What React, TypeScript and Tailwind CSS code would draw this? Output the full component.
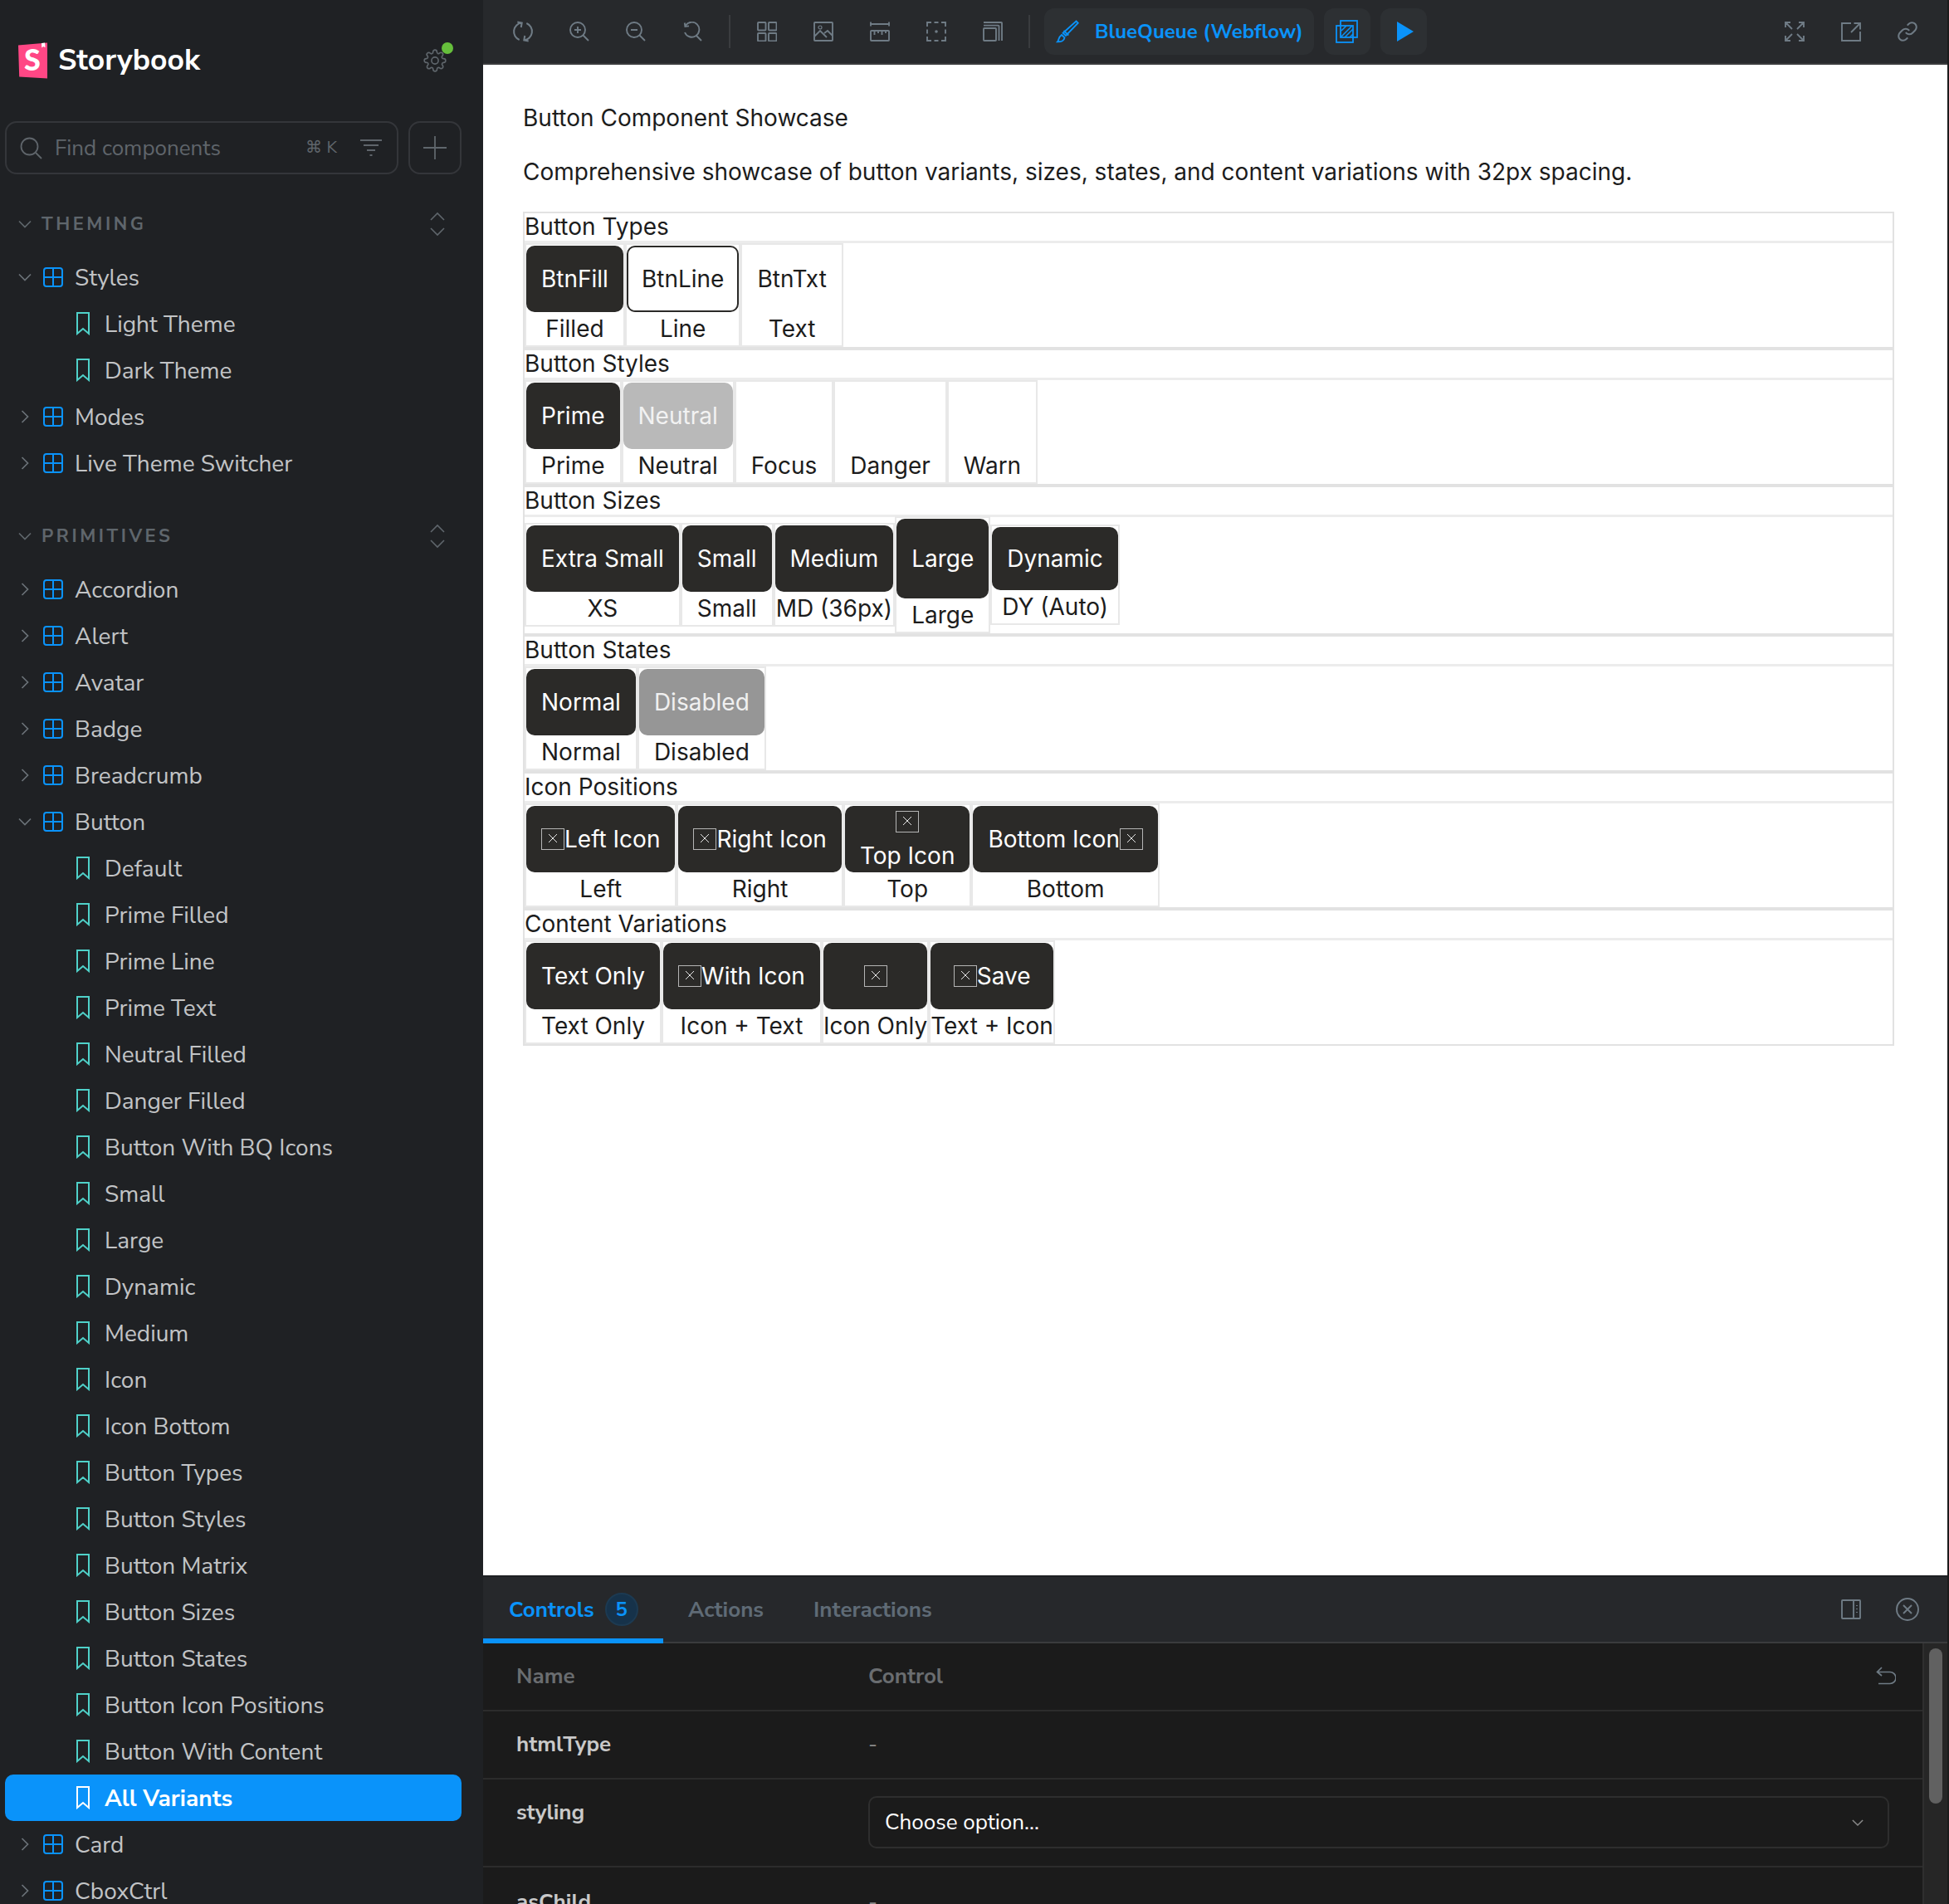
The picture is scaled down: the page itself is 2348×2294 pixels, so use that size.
import React from 'react';

type IconProps = { className?: string };

const Svg: React.FC<{ className?: string; children: React.ReactNode; size?: number; vb?: string }> = ({
  className,
  children,
  size = 24,
  vb = '0 0 24 24',
}) => (
  <svg width={size} height={size} viewBox={vb} fill="none" stroke="currentColor" strokeWidth="1.9" className={className}>
    {children}
  </svg>
);

// Toolbar icons
const SyncIcon = () => (
  <Svg size={26}>
    <path d="M8 21.200A9.800 9.800 0 0 1 10.600 2.400M5.800 1.400l5 1-.9 5" />
    <path d="M16 2.800a9.800 9.800 0 0 1-2.600 18.800M18.200 22.600l-5-1 .9-5" />
  </Svg>
);
const ZoomInIcon = () => (
  <Svg>
    <circle cx="10" cy="10" r="9" />
    <path d="M16.500 16.500L23 23M10 6v8M6 10h8" />
  </Svg>
);
const ZoomOutIcon = () => (
  <Svg>
    <circle cx="10" cy="10" r="9" />
    <path d="M16.500 16.500L23 23M6 10h8" />
  </Svg>
);
const ZoomResetIcon = () => (
  <Svg>
    <path d="M4 4.500A9 9 0 1 1 3 13M2.800 1.500L3.400 6l4.600-.6M16.500 16.500L23 23" />
  </Svg>
);
const GridIcon = () => (
  <Svg>
    <rect x="1" y="1" width="9.500" height="9.500" rx=".8" />
    <rect x="14" y="1" width="9.500" height="9.500" rx=".8" />
    <rect x="1" y="14" width="9.500" height="9.500" rx=".8" />
    <rect x="14" y="14" width="9.500" height="9.500" rx=".8" />
  </Svg>
);
const PhotoIcon = () => (
  <Svg>
    <rect x="1" y="1" width="22" height="22" rx=".8" />
    <circle cx="8" cy="7" r="2" strokeWidth="1.2" />
    <path d="M1.500 17.500L8 11l8 8M13 14l4-3 6 6" />
  </Svg>
);
const RulerIcon = () => (
  <Svg>
    <path d="M1 3h22M1 .5v5M23 .5v5" />
    <rect x="1" y="11" width="22" height="12" rx=".8" />
    <path d="M5.500 11v5M10 11v3M14.500 11v5M19 11v3" />
  </Svg>
);
const OutlineIcon = () => (
  <Svg>
    <path d="M1 6V1h5M18 1h5v5M23 18v5h-5M6 23H1v-5M9.500 1h5M9.500 23h5M1 9.500v5M23 9.500v5" />
    <circle cx="12" cy="12" r="1.800" fill="currentColor" stroke="none" />
  </Svg>
);
const LayersIcon = () => (
  <Svg>
    <rect x="1" y="8" width="15" height="15" rx=".8" />
    <path d="M1 4.600h17.500a1 1 0 0 1 1 1V23M1 1h21.200a.8.8 0 0 1 .8.8V23" />
  </Svg>
);
const BrushIcon = () => (
  <Svg size={28} vb="0 0 28 28" className="shrink-0">
    <path d="M24.500 1.500l2.200 2.200L12 19l-3.400-3.200zM7 18l3.500 3.300c-.4 3.200-3.800 5.200-8.500 5 1.600-1.600 1-5.600 5-8.300zM9.500 13l5.800 5.500" />
  </Svg>
);
const CompareIcon = () => (
  <svg width="28" height="28" viewBox="0 0 28 28" fill="none" stroke="currentColor" strokeWidth="1.800">
    <rect x="6" y="1" width="20" height="20" />
    <rect x="1" y="7" width="20" height="20" />
    <path d="M7 13l6-6M7 20L20 7M11 21L21 11M17 21l4-4" strokeWidth="1.500" />
  </svg>
);
const ExpandIcon = () => (
  <Svg>
    <path d="M1 7V1h6M1 1l8 8M17 1h6v6M23 1l-8 8M1 17v6h6M1 23l8-8M23 17v6h-6M23 23l-8-8" />
  </Svg>
);
const ShareIcon = () => (
  <Svg>
    <path d="M12 2H1v21h22V12M15.500 2H23v7.500M23 2L12 13" />
  </Svg>
);
const LinkIcon = () => (
  <Svg size={26}>
    <path d="M10 13a5 5 0 0 0 7.540.54l3-3a5 5 0 0 0-7.070-7.070l-1.720 1.710" />
    <path d="M14 11a5 5 0 0 0-7.540-.54l-3 3a5 5 0 0 0 7.070 7.070l1.710-1.710" />
  </Svg>
);

// Sidebar icons
const ChevronDown: React.FC<IconProps> = ({ className }) => (
  <svg width="16" height="16" viewBox="0 0 16 16" fill="none" stroke="currentColor" strokeWidth="1.700" className={className}>
    <path d="M1 4.500l7 7 7-7" />
  </svg>
);
const ChevronRight: React.FC<IconProps> = ({ className }) => (
  <svg width="16" height="16" viewBox="0 0 16 16" fill="none" stroke="currentColor" strokeWidth="1.700" className={className}>
    <path d="M4.500 1l7 7-7 7" />
  </svg>
);
const ComponentIcon = () => (
  <svg width="24" height="24" viewBox="0 0 24 24" fill="none" stroke="#0a93fa" strokeWidth="2" className="shrink-0">
    <rect x="1" y="1" width="22" height="22" rx="3" />
    <path d="M12 1v22M1 12h22" />
  </svg>
);
const StoryIcon: React.FC<{ active?: boolean }> = ({ active }) => (
  <svg width="16" height="28" viewBox="0 0 16 28" fill="none" stroke={active ? '#ffffff' : '#4fd1c9'} strokeWidth="2" className="shrink-0">
    <path d="M1 1h14v25l-7-6-7 6z" />
  </svg>
);
const UpDownIcon = () => (
  <svg width="20" height="30" viewBox="0 0 20 30" fill="none" stroke="currentColor" strokeWidth="1.600">
    <path d="M2 10l8-8 8 8M2 20l8 8 8-8" />
  </svg>
);
const SearchIcon = () => (
  <svg width="27" height="27" viewBox="0 0 27 27" fill="none" stroke="currentColor" strokeWidth="1.800">
    <circle cx="11.500" cy="11.500" r="10" />
    <path d="M19 19l7 7" />
  </svg>
);
const FilterIcon = () => (
  <svg width="26" height="22" viewBox="0 0 26 22" fill="none" stroke="currentColor" strokeWidth="1.800">
    <path d="M0 2h26M4 8h18M8 14h10M11.500 20h3" />
  </svg>
);
const PlusIcon = () => (
  <svg width="28" height="28" viewBox="0 0 28 28" fill="none" stroke="currentColor" strokeWidth="1.800">
    <path d="M14 0v28M0 14h28" />
  </svg>
);
const GearIcon = () => (
  <svg width="28" height="28" viewBox="0 0 24 24" fill="none" stroke="currentColor" strokeWidth="1.400">
    <circle cx="12" cy="12" r="3.500" />
    <path d="M19.400 15a1.650 1.650 0 0 0 .33 1.820l.06.06a2 2 0 1 1-2.830 2.830l-.06-.06a1.650 1.650 0 0 0-2.800 1.170V21a2 2 0 1 1-4 0v-.09a1.650 1.650 0 0 0-2.820-1.170l-.06.06a2 2 0 1 1-2.830-2.830l.06-.06A1.650 1.650 0 0 0 3.090 14H3a2 2 0 1 1 0-4h.09a1.650 1.650 0 0 0 1.170-2.820l-.06-.06a2 2 0 1 1 2.830-2.830l.06.06A1.650 1.650 0 0 0 10 3.090V3a2 2 0 1 1 4 0v.09a1.650 1.650 0 0 0 2.820 1.170l.06-.06a2 2 0 1 1 2.830 2.830l-.06.06A1.650 1.650 0 0 0 20.910 10H21a2 2 0 1 1 0 4h-.09a1.650 1.650 0 0 0-1.510 1z" />
  </svg>
);
const Logo = () => (
  <svg width="36" height="44" viewBox="0 0 36 44" className="shrink-0">
    <path d="M0 3.500L35 0.500V43.500L1.200 41.500z" fill="#ff4785" />
    <path d="M28 .9l.3 5.500 2-1.500 2.200 1.300L32.200 .6z" fill="#ffffff" />
    <text x="17" y="34" textAnchor="middle" fontFamily="Lato, sans-serif" fontWeight="900" fontSize="36" fill="#ffffff">
      S
    </text>
  </svg>
);

const ThemingRows = [
  { label: 'Styles', kind: 'open' },
  { label: 'Light Theme', kind: 'story' },
  { label: 'Dark Theme', kind: 'story' },
  { label: 'Modes', kind: 'closed' },
  { label: 'Live Theme Switcher', kind: 'closed' },
];

const PrimitiveRows = [
  { label: 'Accordion', kind: 'closed' },
  { label: 'Alert', kind: 'closed' },
  { label: 'Avatar', kind: 'closed' },
  { label: 'Badge', kind: 'closed' },
  { label: 'Breadcrumb', kind: 'closed' },
  { label: 'Button', kind: 'open' },
  { label: 'Default', kind: 'story' },
  { label: 'Prime Filled', kind: 'story' },
  { label: 'Prime Line', kind: 'story' },
  { label: 'Prime Text', kind: 'story' },
  { label: 'Neutral Filled', kind: 'story' },
  { label: 'Danger Filled', kind: 'story' },
  { label: 'Button With BQ Icons', kind: 'story' },
  { label: 'Small', kind: 'story' },
  { label: 'Large', kind: 'story' },
  { label: 'Dynamic', kind: 'story' },
  { label: 'Medium', kind: 'story' },
  { label: 'Icon', kind: 'story' },
  { label: 'Icon Bottom', kind: 'story' },
  { label: 'Button Types', kind: 'story' },
  { label: 'Button Styles', kind: 'story' },
  { label: 'Button Matrix', kind: 'story' },
  { label: 'Button Sizes', kind: 'story' },
  { label: 'Button States', kind: 'story' },
  { label: 'Button Icon Positions', kind: 'story' },
  { label: 'Button With Content', kind: 'story' },
  { label: 'All Variants', kind: 'active' },
  { label: 'Card', kind: 'closed' },
  { label: 'CboxCtrl', kind: 'closed' },
];

const TreeRow: React.FC<{ label: string; kind: string }> = ({ label, kind }) => {
  if (kind === 'story' || kind === 'active') {
    const active = kind === 'active';
    return (
      <div className={`ml-[6px] flex h-14 w-[550px] shrink-0 items-center gap-[18px] rounded-[10px] pl-[86px] ${active ? 'bg-[#0a93fa] font-bold text-white' : 'text-[#c2c4c6]'}`}>
        <StoryIcon active={active} />
        <span className="pt-[2px]">{label}</span>
      </div>
    );
  }
  return (
    <div className="ml-[6px] flex h-14 w-[550px] shrink-0 items-center pl-[16px] text-[#c2c4c6]">
      <span className="flex w-4 justify-center text-[#6b7278]">
        {kind === 'open' ? <ChevronDown /> : <ChevronRight />}
      </span>
      <span className="ml-[14px] mr-[14px]">
        <ComponentIcon />
      </span>
      <span className="pt-[2px]">{label}</span>
    </div>
  );
};

const GroupHeader: React.FC<{ label: string }> = ({ label }) => (
  <div className="mt-[33px] mb-[11px] flex h-[52px] shrink-0 items-center pl-[22px] pr-[45px] pt-[2px] text-[#5f666c]">
    <ChevronDown />
    <span className="ml-[12px] text-[22px] font-bold tracking-[0.16em]">{label}</span>
    <span className="ml-auto flex">
      <UpDownIcon />
    </span>
  </div>
);

const Sidebar = () => (
  <aside className="flex h-full w-[582px] shrink-0 flex-col overflow-hidden bg-[#1f2124] font-[Nunito_Sans,Lato,sans-serif] text-[28px]">
    <div className="flex h-[146px] shrink-0 items-center pl-[22px] pr-[44px]">
      <Logo />
      <span className="ml-[12px] text-[35.500px] font-bold text-white">Storybook</span>
      <span className="relative ml-auto flex text-[#5f666c]">
        <GearIcon />
        <span className="absolute right-[-8px] top-[-8px] h-[14px] w-[14px] rounded-full bg-[#66bf3c]" />
      </span>
    </div>
    <div className="flex shrink-0 gap-3 px-[6px]">
      <div className="flex h-16 w-[474px] items-center rounded-[14px] border-2 border-[#34363a] pl-[16px] pr-[18px] text-[#5f656b]">
        <SearchIcon />
        <span className="ml-[15px] text-[26px]">Find components</span>
        <span className="ml-auto mr-[28px] text-[20px]">⌘ K</span>
        <FilterIcon />
      </div>
      <div className="flex h-16 w-16 items-center justify-center rounded-[14px] border-2 border-[#34363a] text-[#5f666c]">
        <PlusIcon />
      </div>
    </div>
    <GroupHeader label="THEMING" />
    {ThemingRows.map((row) => (
      <TreeRow key={row.label} {...row} />
    ))}
    <GroupHeader label="PRIMITIVES" />
    {PrimitiveRows.map((row) => (
      <TreeRow key={row.label} {...row} />
    ))}
  </aside>
);

const Toolbar = () => (
  <header className="flex h-[78px] shrink-0 items-center border-b-2 border-[#3a3b3d] bg-[#27292c] pl-[36px] pr-[36px] font-[Nunito_Sans,Lato,sans-serif] text-[#6f7b85]">
    <div className="flex items-center gap-[44px]">
      <span className="-mx-px flex">
        <SyncIcon />
      </span>
      <ZoomInIcon />
      <ZoomOutIcon />
      <ZoomResetIcon />
    </div>
    <span className="mx-[32px] h-10 w-[2px] bg-[#3a3c3f]" />
    <div className="flex gap-[44px]">
      <GridIcon />
      <PhotoIcon />
      <RulerIcon />
      <OutlineIcon />
      <LayersIcon />
    </div>
    <span className="ml-[31px] mr-[17px] h-10 w-[2px] bg-[#3a3c3f]" />
    <div className="flex h-14 w-[325px] shrink-0 items-center self-center rounded-[12px] bg-[#2d3033] pl-[14px] text-[#0a93fa]">
      <BrushIcon />
      <span className="ml-[19px] whitespace-nowrap text-[24px] font-bold">BlueQueue (Webflow)</span>
    </div>
    <div className="ml-3 flex h-14 w-14 items-center justify-center rounded-[12px] bg-[#2d3033] text-[#0a93fa]">
      <CompareIcon />
    </div>
    <div className="ml-3 flex h-14 w-14 items-center justify-center rounded-[12px] bg-[#2d3033]">
      <svg width="20" height="24" viewBox="0 0 20 24" className="ml-[3px]">
        <path d="M0 0l20 12L0 24z" fill="#0a93fa" />
      </svg>
    </div>
    <div className="ml-auto flex items-center gap-[44px]">
      <ExpandIcon />
      <ShareIcon />
      <span className="-mx-px flex">
        <LinkIcon />
      </span>
    </div>
  </header>
);

const BrokenIcon = () => (
  <span className="inline-flex h-[26px] w-[28px] shrink-0 items-center justify-center border border-[#b5b5b5] pb-[2px]">
    <svg width="12" height="12" viewBox="0 0 12 12" stroke="#e8e8e8" strokeWidth="1">
      <path d="M1 1l10 10M11 1L1 11" />
    </svg>
  </span>
);

const fill = 'h-20 bg-[#2b2a28] text-white px-[18px]';

const Cell: React.FC<{ label: string; labelClass?: string; children?: React.ReactNode }> = ({
  label,
  labelClass = 'h-10',
  children,
}) => (
  <div className="flex flex-col items-stretch border-2 border-[#e8e8e8] pt-px">
    {children}
    <div className={`flex items-center justify-center whitespace-nowrap ${labelClass}`}>{label}</div>
  </div>
);

const Btn: React.FC<{ className?: string; children: React.ReactNode }> = ({ className = fill, children }) => (
  <div className={`flex items-center justify-center whitespace-nowrap rounded-[10px] ${className}`}>
    {children}
  </div>
);

const Section: React.FC<{ title: string; sizes?: boolean; children: React.ReactNode }> = ({ title, sizes, children }) => (
  <section className="border-b-4 border-[#e2e2e2] last:border-b-0">
    <div className="flex h-[36px] items-center border-b-[3px] border-[#ececec] pb-[2px]">{title}</div>
    <div className={`flex ${sizes ? 'h-[140px] items-center pb-[2px]' : 'items-start'}`}>{children}</div>
  </section>
);

const Showcase = () => (
  <main className="min-h-0 flex-1 overflow-hidden bg-white pl-[48px] pr-[64px] pt-[44px] font-[Inter,sans-serif] text-[28px] leading-[34px] text-[#1c1c1c]">
    <p className="flex h-10 items-center">Button Component Showcase</p>
    <p className="mt-[25px] flex h-10 items-center">
      Comprehensive showcase of button variants, sizes, states, and content variations with 32px spacing.
    </p>
    <div className="mt-[28px] border-2 border-[#e2e2e2]">
      <Section title="Button Types">
        <Cell label="Filled">
          <Btn>BtnFill</Btn>
        </Cell>
        <Cell label="Line">
          <Btn className="h-20 border-2 border-[#2b2a28] bg-white px-[16px] text-[#1c1c1c]">BtnLine</Btn>
        </Cell>
        <Cell label="Text">
          <Btn className="h-20 bg-white px-[18px] text-[#1c1c1c]">BtnTxt</Btn>
        </Cell>
      </Section>
      <Section title="Button Styles">
        <Cell label="Prime">
          <Btn>Prime</Btn>
        </Cell>
        <Cell label="Neutral">
          <Btn className="h-20 bg-[#b9b9b9] px-[18px] text-[#f2f2f2]">Neutral</Btn>
        </Cell>
        <Cell label="Focus" labelClass="h-10 mt-20 px-[18px]" />
        <Cell label="Danger" labelClass="h-10 mt-20 px-[18px]" />
        <Cell label="Warn" labelClass="h-10 mt-20 px-[18px]" />
      </Section>
      <Section title="Button Sizes" sizes>
        <Cell label="XS">
          <Btn>Extra Small</Btn>
        </Cell>
        <Cell label="Small">
          <Btn>Small</Btn>
        </Cell>
        <Cell label="MD (36px)">
          <Btn>Medium</Btn>
        </Cell>
        <Cell label="Large">
          <Btn className="h-24 bg-[#2b2a28] px-[18px] text-white">Large</Btn>
        </Cell>
        <Cell label="DY (Auto)">
          <Btn className="h-[76px] bg-[#2b2a28] px-[18px] text-white">Dynamic</Btn>
        </Cell>
      </Section>
      <Section title="Button States">
        <Cell label="Normal">
          <Btn>Normal</Btn>
        </Cell>
        <Cell label="Disabled">
          <Btn className="h-20 bg-[#969696] px-[18px] text-[#f0f0f0]">Disabled</Btn>
        </Cell>
      </Section>
      <Section title="Icon Positions">
        <Cell label="Left">
          <Btn>
            <BrokenIcon />
            Left Icon
          </Btn>
        </Cell>
        <Cell label="Right">
          <Btn>
            <BrokenIcon />
            Right Icon
          </Btn>
        </Cell>
        <Cell label="Top">
          <Btn className="h-20 flex-col gap-[11px] bg-[#2b2a28] px-[18px] pt-[2px] text-white">
            <BrokenIcon />
            Top Icon
          </Btn>
        </Cell>
        <Cell label="Bottom">
          <Btn>
            Bottom Icon
            <BrokenIcon />
          </Btn>
        </Cell>
      </Section>
      <Section title="Content Variations">
        <Cell label="Text Only">
          <Btn>Text Only</Btn>
        </Cell>
        <Cell label="Icon + Text">
          <Btn>
            <BrokenIcon />
            With Icon
          </Btn>
        </Cell>
        <Cell label="Icon Only">
          <Btn>
            <BrokenIcon />
          </Btn>
        </Cell>
        <Cell label="Text + Icon">
          <Btn>
            <BrokenIcon />
            Save
          </Btn>
        </Cell>
      </Section>
    </div>
  </main>
);

const AddonPanel = () => (
  <section className="flex h-[396px] shrink-0 flex-col overflow-hidden border-t-2 border-[#1e2023] bg-[#1b1b1b] font-[Nunito_Sans,Lato,sans-serif] text-[26px]">
    <div className="flex h-[80px] shrink-0 items-stretch border-b-2 border-[#3a3b3d] bg-[#26282b] font-bold text-[#5f6b76]">
      <div className="-mb-[2px] flex w-[217px] items-center border-b-[6px] border-[#0a93fa] pl-[31px] pt-[4px] text-[#0a93fa]">
        Controls
        <span className="ml-[13px] flex h-10 w-10 items-center justify-center rounded-full border-2 border-[#1c3a52] bg-[#16324a] text-[24px]">5</span>
      </div>
      <span className="ml-[30px] flex items-center">Actions</span>
      <span className="ml-[60px] flex items-center">Interactions</span>
      <div className="ml-auto flex items-center gap-[42px] pr-[34px] text-[#6f7b85]">
        <Svg>
          <rect x="1" y="1" width="22" height="22" rx=".8" />
          <path d="M15 1v22M19 7v1M19 11v1M19 15v1" />
        </Svg>
        <Svg size={28} vb="0 0 28 28">
          <circle cx="14" cy="14" r="13" />
          <path d="M9 9l10 10M19 9L9 19" />
        </Svg>
      </div>
    </div>
    <div className="flex min-h-0 flex-1">
      <div className="flex-1">
        <div className="flex h-[82px] items-center border-b-2 border-[#2c2c2c] pb-[2px] pr-[32px] font-bold text-[#6a6d70]">
          <span className="w-[464px] pl-10">Name</span>
          <span>Control</span>
          <svg width="24" height="22" viewBox="0 0 24 22" fill="none" stroke="#6f7b85" strokeWidth="1.700" className="ml-auto">
            <path d="M7 1L1.500 6.500 7 11M1.500 6.500H17a6 6 0 0 1 0 14H3" />
          </svg>
        </div>
        <div className="flex h-[82px] items-center border-b-2 border-[#2c2c2c] pb-[2px] text-[#c9c9c9]">
          <span className="w-[464px] pl-10 font-bold">htmlType</span>
          <span className="text-[#8a8a8a]">-</span>
        </div>
        <div className="flex h-[106px] border-b-2 border-[#2c2c2c] pt-[20px] text-[#c9c9c9]">
          <span className="h-10 w-[464px] pl-10 font-bold">styling</span>
          <div className="flex h-[63px] w-[1230px] items-center rounded-[10px] border-2 border-[#2e2e2e] pl-[18px] pr-[29px] text-white">
            Choose option...
            <ChevronDown className="ml-auto h-[14px] w-[14px] text-[#8a8a8a]" />
          </div>
        </div>
        <div className="flex h-[82px] items-center text-[#c9c9c9]">
          <span className="w-[464px] pl-10 font-bold">asChild</span>
          <span className="text-[#8a8a8a]">-</span>
        </div>
      </div>
      <div className="w-[30px] shrink-0 border-l-2 border-[#2f2f2f] bg-[#262626] pl-[6px] pt-[6px]">
        <div className="h-[187px] w-4 rounded-full bg-[#616161]" />
      </div>
    </div>
  </section>
);

export default function App() {
  return (
    <div className="flex h-[2294px] w-[2348px] overflow-hidden bg-[#1b1b1b]">
      <Sidebar />
      <div className="flex w-[1764px] shrink-0 flex-col">
        <Toolbar />
        <Showcase />
        <AddonPanel />
      </div>
    </div>
  );
}
